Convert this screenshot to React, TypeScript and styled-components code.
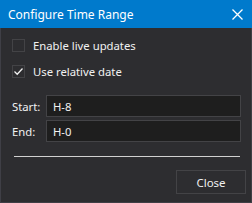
import React from "react";
import styled, { createGlobalStyle } from "styled-components";

const Global = createGlobalStyle`
  html, body { margin: 0; padding: 0; background: #2d2d30; }
  body { font-family: "Noto Sans", "Open Sans", sans-serif; }
`;

const Window = styled.div`
  width: 252px;
  height: 203px;
  display: flex;
  flex-direction: column;
  box-sizing: border-box;
  background: #2d2d30;
  color: #f1f1f1;
`;

const TitleBar = styled.div`
  height: 28px;
  flex: none;
  background: #007acc;
  display: flex;
  align-items: center;
  justify-content: space-between;
  padding: 0 9px 0 8px;
  box-sizing: border-box;
`;

const Title = styled.span`
  font-size: 12px;
  color: #ffffff;
`;

const CloseX = styled.button`
  border: 0;
  background: transparent;
  padding: 0;
  width: 12px;
  height: 12px;
  display: flex;
  align-items: center;
  justify-content: center;
  cursor: pointer;
`;

const Body = styled.div`
  flex: 1;
  display: flex;
  flex-direction: column;
  border: 1px solid #3f3f46;
  border-top: 0;
  padding: 11px 5px 8px 11px;
  box-sizing: border-box;
`;

const CheckRow = styled.label<{ $mb: number }>`
  display: flex;
  align-items: center;
  gap: 8px;
  height: 13px;
  margin-bottom: ${(p) => p.$mb}px;
  font-size: 11.3px;
  color: #f1f1f1;
`;

const Box = styled.span`
  width: 13px;
  height: 13px;
  box-sizing: border-box;
  border: 1px solid #434346;
  background: #2d2d30;
  display: flex;
  align-items: center;
  justify-content: center;
`;

const Form = styled.div`
  display: grid;
  grid-template-columns: 34px 195px;
  row-gap: 3px;
  align-items: center;
`;

const Label = styled.span`
  font-size: 11.3px;
  color: #f1f1f1;
`;

const Input = styled.div`
  height: 22px;
  box-sizing: border-box;
  border: 1px solid #434346;
  background: #1e1e1e;
  display: flex;
  align-items: center;
  padding-left: 6px;
  font-size: 11.3px;
  color: #f1f1f1;
`;

const Separator = styled.div`
  height: 1px;
  width: 226px;
  margin: 14px 0 0 2px;
  background: #d0d0d0;
`;

const Footer = styled.div`
  display: flex;
  justify-content: flex-end;
  margin-top: 13px;
`;

const Button = styled.button`
  width: 70px;
  height: 24px;
  box-sizing: border-box;
  border: 1px solid #434346;
  background: #2d2d30;
  color: #f1f1f1;
  font-family: inherit;
  font-size: 11.5px;
  padding: 0;
`;

export default function App() {
  return (
    <>
      <Global />
      <Window>
        <TitleBar>
          <Title>Configure Time Range</Title>
          <CloseX aria-label="close">
            <svg width="11" height="11" viewBox="0 0 11 11">
              <path d="M0.5 0.5 L10.5 10.5 M10.5 0.5 L0.5 10.5" stroke="#fff" strokeWidth="1.3" />
            </svg>
          </CloseX>
        </TitleBar>
        <Body>
          <CheckRow $mb={13}>
            <Box />
            Enable live updates
          </CheckRow>
          <CheckRow $mb={17}>
            <Box>
              <svg width="11" height="11" viewBox="0 0 11 11">
                <path d="M1.5 5.5 L4.2 8.2 L9.5 2.5" stroke="#f1f1f1" strokeWidth="1.3" fill="none" />
              </svg>
            </Box>
            Use relative date
          </CheckRow>
          <Form>
            <Label>Start:</Label>
            <Input>H-8</Input>
            <Label>End:</Label>
            <Input>H-0</Input>
          </Form>
          <Separator />
          <Footer>
            <Button>Close</Button>
          </Footer>
        </Body>
      </Window>
    </>
  );
}
